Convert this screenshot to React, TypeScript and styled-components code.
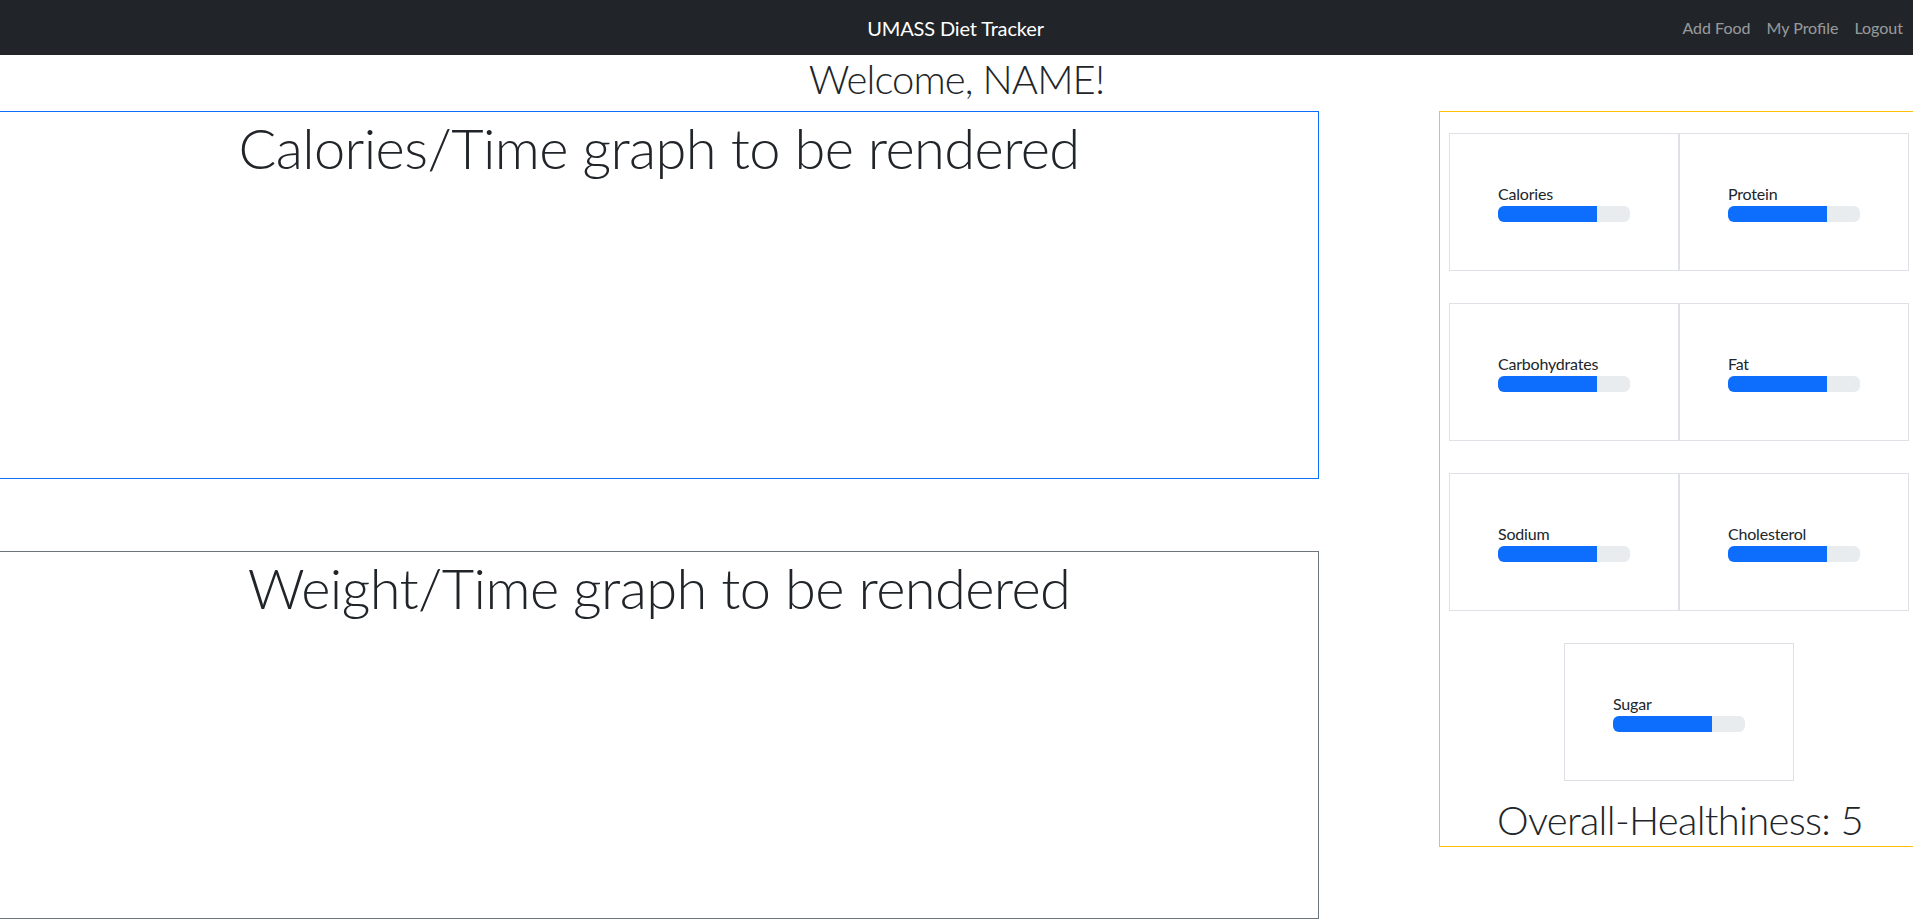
import styled, { createGlobalStyle } from "styled-components";

type Nutrient = {
  name: string;
  percent: number;
};

const nutrients: Nutrient[] = [
  { name: "Calories", percent: 75 },
  { name: "Protein", percent: 75 },
  { name: "Carbohydrates", percent: 75 },
  { name: "Fat", percent: 75 },
  { name: "Sodium", percent: 75 },
  { name: "Cholesterol", percent: 75 },
];

const sugar: Nutrient = { name: "Sugar", percent: 75 };

const GlobalStyle = createGlobalStyle`
  body {
    margin: 0;
    overflow: hidden;
    background: #fff;
    color: #212529;
    font-family: Lato, "Open Sans", "Liberation Sans", sans-serif;
  }
  * {
    box-sizing: border-box;
  }
`;

const NutrientCard = ({ item, wide }: { item: Nutrient; wide?: boolean }) => (
  <Card wide={wide}>
    <CardBody>
      <Label>{item.name}</Label>
      <Progress>
        <ProgressFill style={{ width: `${item.percent}%` }} />
      </Progress>
    </CardBody>
  </Card>
);

const App = () => {
  return (
    <>
      <GlobalStyle />
      <Navbar>
        <span />
        <Brand>UMASS Diet Tracker</Brand>
        <NavLinks>
          <NavLink href="#">Add Food</NavLink>
          <NavLink href="#">My Profile</NavLink>
          <NavLink href="#">Logout</NavLink>
        </NavLinks>
      </Navbar>

      <Welcome>Welcome, NAME!</Welcome>

      <Main>
        <Graphs>
          <GraphBox color="#0d6efd">
            <GraphTitle>Calories/Time graph to be rendered</GraphTitle>
          </GraphBox>
          <GraphBox color="#6c757d">
            <GraphTitle>Weight/Time graph to be rendered</GraphTitle>
          </GraphBox>
        </Graphs>

        <StatsPanel>
          <CardGrid>
            {nutrients.map((n) => (
              <NutrientCard key={n.name} item={n} />
            ))}
            <NutrientCard item={sugar} wide />
          </CardGrid>
          <Overall>Overall-Healthiness: 5</Overall>
        </StatsPanel>
      </Main>
    </>
  );
};

export default App;

const Navbar = styled.nav`
  height: 55px;
  background-color: #212529;
  display: grid;
  grid-template-columns: 1fr auto 1fr;
  align-items: center;
  padding: 0 2px 0 0;
`;

const Brand = styled.span`
  color: #fff;
  font-size: 20px;
  line-height: 30px;
  letter-spacing: -0.15px;
`;

const NavLinks = styled.div`
  display: flex;
  justify-content: flex-end;
`;

const NavLink = styled.a`
  color: rgba(255, 255, 255, 0.55);
  text-decoration: none;
  font-size: 16px;
  line-height: 24px;
  padding: 8px;
`;

const Welcome = styled.h1`
  margin: 0 0 8px;
  text-align: center;
  font-size: 40px;
  font-weight: 300;
  line-height: 48px;
  letter-spacing: -0.9px;
`;

const Main = styled.div`
  display: flex;
  align-items: flex-start;
  gap: 120px;
`;

const Graphs = styled.div`
  display: flex;
  flex-direction: column;
  gap: 72px;
  width: 1320px;
  margin-left: -1px;
  flex-shrink: 0;
`;

const GraphBox = styled.div<{ color: string }>`
  height: 368px;
  border: 1px solid ${(p) => p.color};
  padding-top: 2px;
`;

const GraphTitle = styled.h2`
  margin: 0;
  text-align: center;
  font-size: 56px;
  font-weight: 300;
  line-height: 1.2;
  letter-spacing: -0.6px;
`;

const StatsPanel = styled.div`
  width: 482px;
  height: 736px;
  flex-shrink: 0;
  border: 1px solid #ffc107;
  padding: 21px 0 0 9px;
  display: flex;
  flex-direction: column;
`;

const CardGrid = styled.div`
  display: grid;
  grid-template-columns: repeat(2, 230px);
  row-gap: 32px;
`;

const Card = styled.div<{ wide?: boolean }>`
  height: 138px;
  width: 230px;
  border: 1px solid #dee2e6;
  display: flex;
  align-items: center;
  justify-content: center;
  grid-column: ${(p) => (p.wide ? "span 2" : "auto")};
  justify-self: center;
`;

const CardBody = styled.div`
  width: 132px;
`;

const Label = styled.div`
  font-size: 16px;
  line-height: 24px;
  letter-spacing: -0.2px;
`;

const Progress = styled.div`
  height: 16px;
  border-radius: 6px;
  background-color: #e9ecef;
  overflow: hidden;
`;

const ProgressFill = styled.div`
  height: 100%;
  background-color: #0d6efd;
`;

const Overall = styled.div`
  margin-top: 15px;
  margin-left: -9px;
  text-align: center;
  font-size: 40px;
  font-weight: 300;
  line-height: 48px;
  letter-spacing: -0.7px;
`;
